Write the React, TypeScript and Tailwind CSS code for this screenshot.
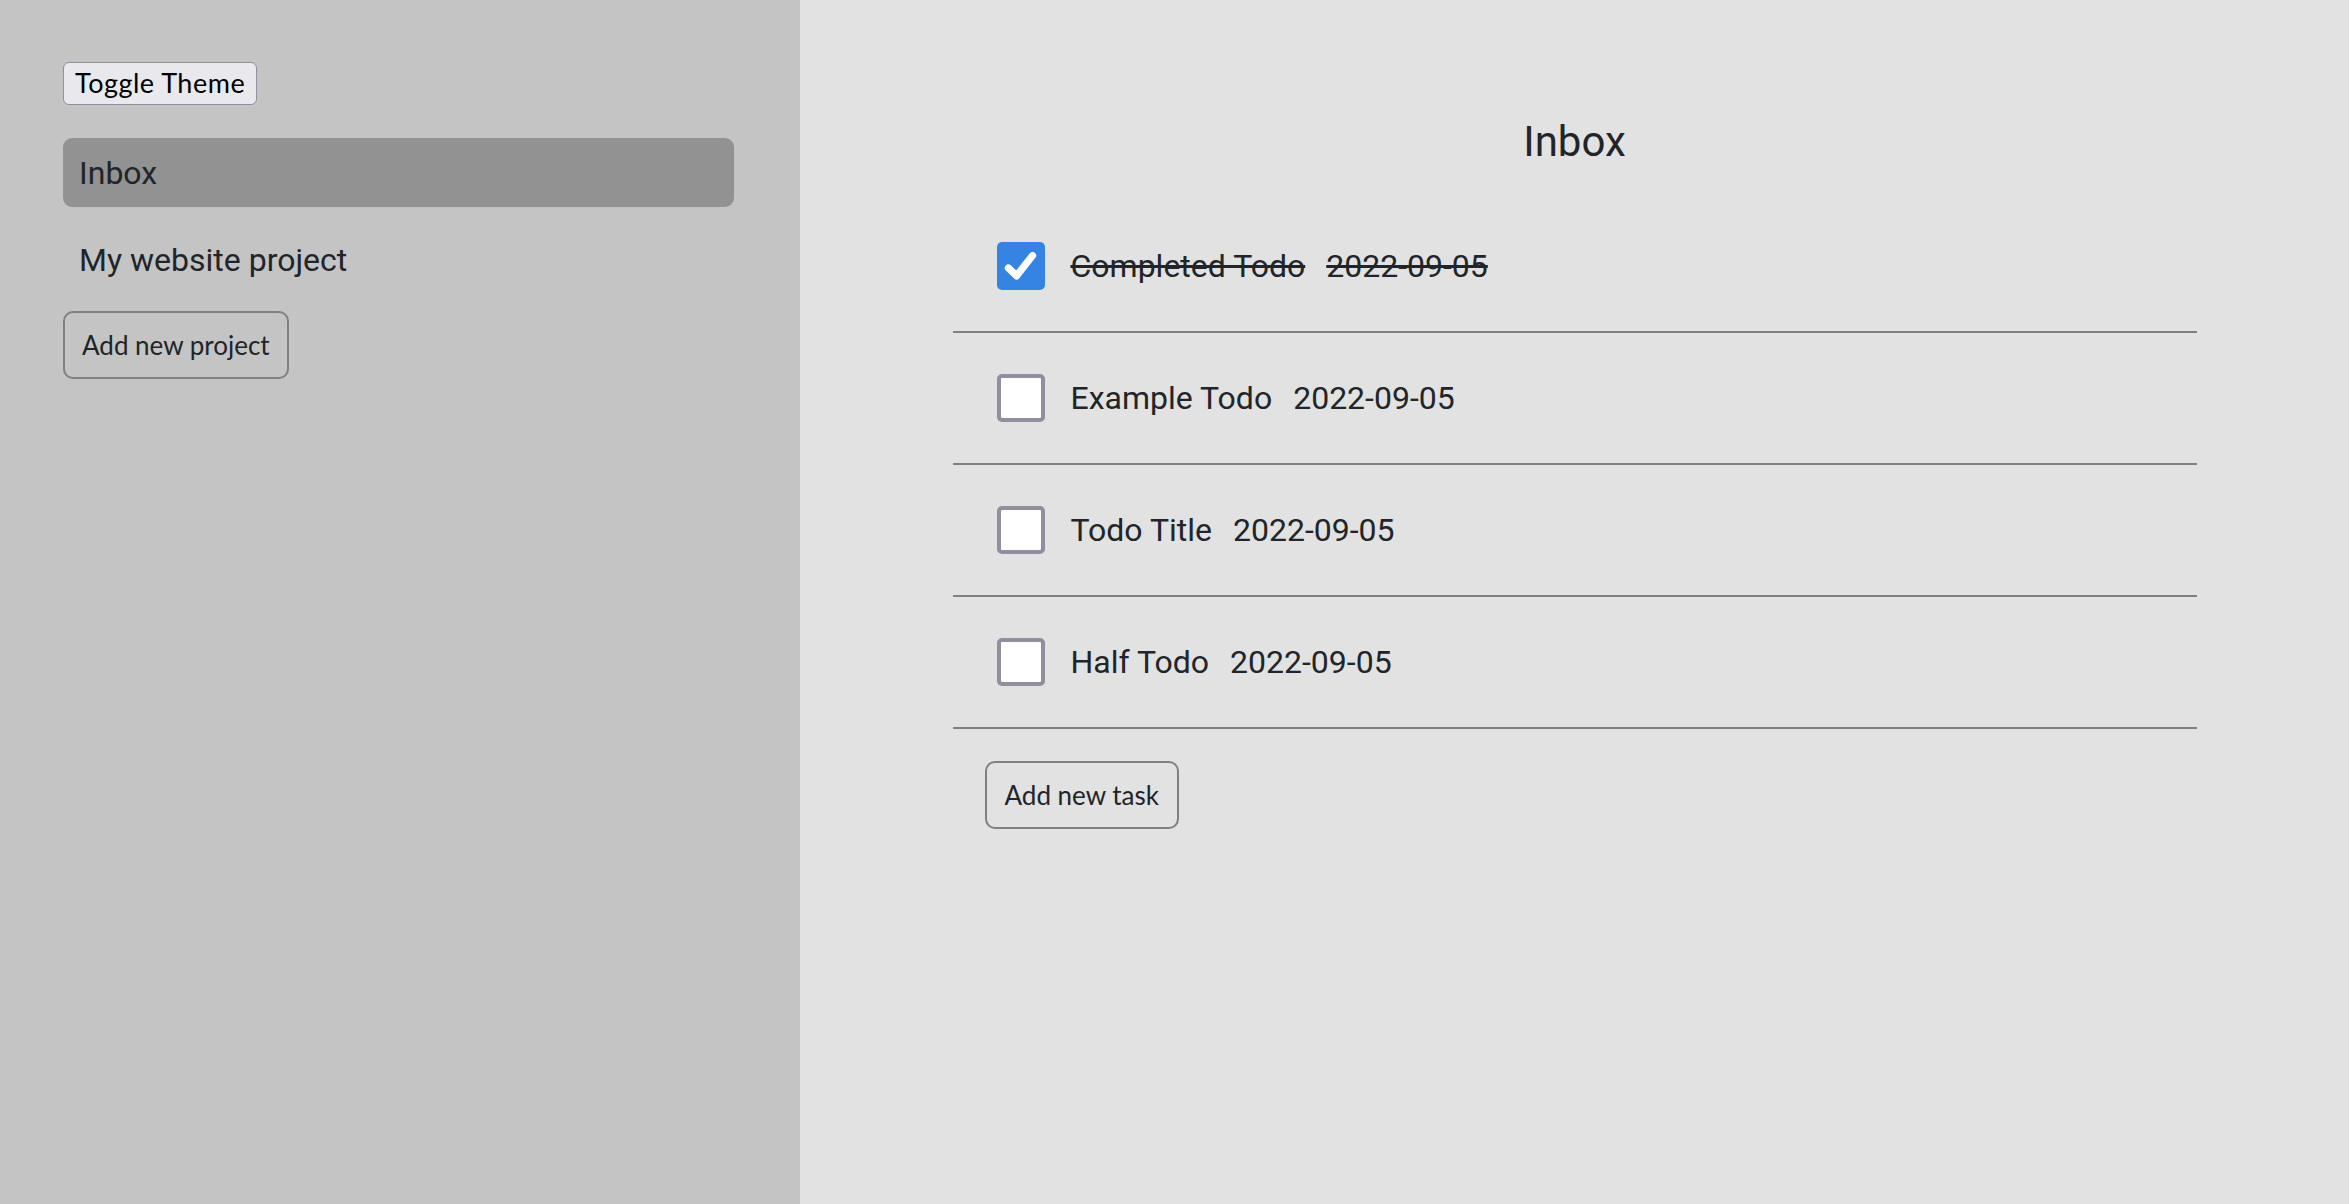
import { useState } from "react";

type Todo = {
  id: number;
  title: string;
  date: string;
  done: boolean;
};

const initialTodos: Todo[] = [
  { id: 1, title: "Completed Todo", date: "2022-09-05", done: true },
  { id: 2, title: "Example Todo", date: "2022-09-05", done: false },
  { id: 3, title: "Todo Title", date: "2022-09-05", done: false },
  { id: 4, title: "Half Todo", date: "2022-09-05", done: false },
];

const projects = ["Inbox", "My website project"];

function Checkbox({ checked, onChange }: { checked: boolean; onChange: () => void }) {
  return (
    <button
      type="button"
      onClick={onChange}
      className={
        checked
          ? "flex h-[48px] w-[48px] shrink-0 items-center justify-center rounded-[5px] bg-[#3584e4]"
          : "h-[48px] w-[48px] shrink-0 rounded-[5px] border-[4px] border-[#8f8f9d] bg-white"
      }
    >
      {checked && (
        <svg viewBox="0 0 16 16" className="h-[44px] w-[44px]">
          <path
            d="M3.4 8.7 L6.4 11.6 L12.2 4.2"
            fill="none"
            stroke="white"
            strokeWidth="2.6"
            strokeLinecap="round"
            strokeLinejoin="round"
          />
        </svg>
      )}
    </button>
  );
}

export default function App() {
  const [todos, setTodos] = useState(initialTodos);
  const [active, setActive] = useState("Inbox");

  const toggle = (id: number) =>
    setTodos((list) => list.map((t) => (t.id === id ? { ...t, done: !t.done } : t)));

  return (
    <div className="flex h-[1204px] w-full font-['Roboto',sans-serif] text-[#212529]">
      {/* Sidebar */}
      <aside className="w-[800px] shrink-0 bg-[#c4c4c4] pl-[63px] pr-[66px] pt-[62px]">
        <button
          type="button"
          className="h-[43px] rounded-[6px] border-[1.5px] border-[#8f8f9d] bg-[#e9e9ed] px-[11px] font-['Lato',sans-serif] text-[27px] tracking-[0.5px] text-black"
        >
          Toggle Theme
        </button>

        <nav className="mt-[33px] flex flex-col gap-[18px]">
          {projects.map((p) => (
            <div
              key={p}
              onClick={() => setActive(p)}
              className={
                active === p
                  ? "flex h-[69px] items-center rounded-[9px] bg-[#929292] pl-[16px] text-[32px]"
                  : "flex h-[69px] items-center rounded-[9px] pl-[16px] text-[32px]"
              }
            >
              {p}
            </div>
          ))}
        </nav>

        <button
          type="button"
          className="mt-[17px] h-[68px] rounded-[10px] border-2 border-[#808080] px-[17px] font-['Lato',sans-serif] text-[26px] text-[#212529]"
        >
          Add new project
        </button>
      </aside>

      {/* Main */}
      <main className="flex-1 bg-[#e2e2e2] pt-[117px]">
        <h1 className="text-center text-[42px] leading-[50px] font-normal">{active}</h1>

        <div className="mx-auto mt-[34px] w-[1244px]">
          <ul>
            {todos.map((t) => (
              <li
                key={t.id}
                className="flex h-[132px] items-center border-b-2 border-[#808080] pl-[44px]"
              >
                <Checkbox checked={t.done} onChange={() => toggle(t.id)} />
                <span className={t.done ? "ml-[26px] text-[32px] line-through" : "ml-[26px] text-[32px]"}>
                  {t.title}
                </span>
                <span className={t.done ? "ml-[21px] text-[32px] line-through" : "ml-[21px] text-[32px]"}>
                  {t.date}
                </span>
              </li>
            ))}
          </ul>

          <button
            type="button"
            className="mt-[32px] ml-[32px] h-[68px] rounded-[10px] border-2 border-[#808080] px-[18px] font-['Lato',sans-serif] text-[26px] text-[#212529]"
          >
            Add new task
          </button>
        </div>
      </main>
    </div>
  );
}
